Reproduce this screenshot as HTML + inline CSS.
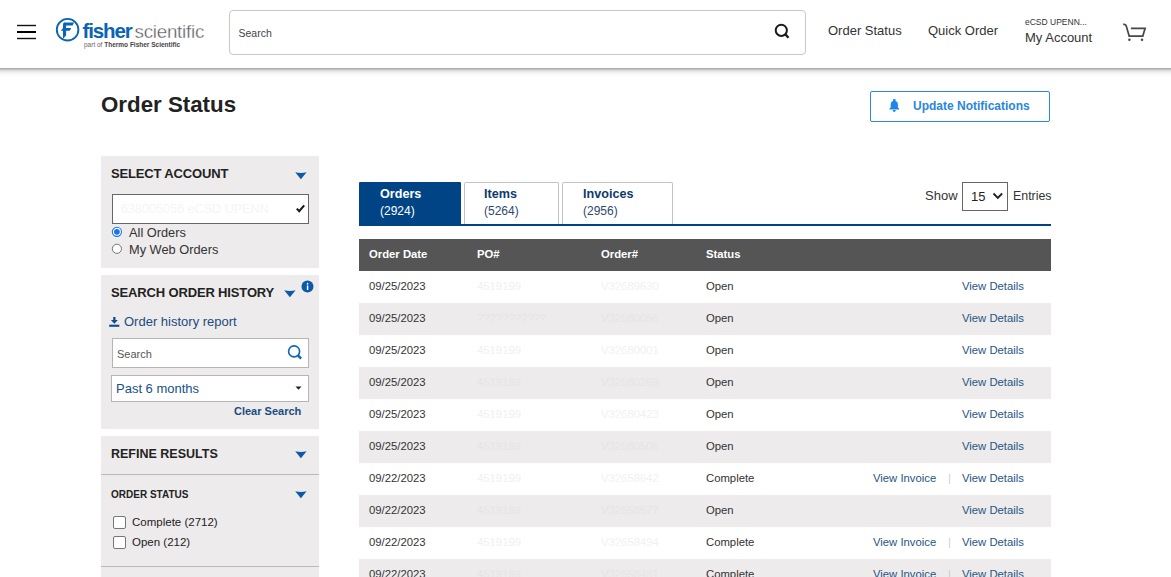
<!DOCTYPE html>
<html><head><meta charset="utf-8">
<style>
*{margin:0;padding:0;box-sizing:border-box;}
html,body{width:1171px;height:577px;overflow:hidden;background:#fff;}
body{font-family:"Liberation Sans",sans-serif;color:#333;position:relative;}
.a{position:absolute;white-space:nowrap;line-height:1;}
.hdr{position:absolute;left:0;top:0;width:1171px;height:68px;background:#fff;z-index:5;}
.shd{position:absolute;left:-30px;top:0;width:1231px;height:68px;background:#fff;box-shadow:0 1px 2px rgba(0,0,0,.22),0 2px 6px rgba(0,0,0,.3);z-index:4;}
.ham{position:absolute;left:17px;width:19px;height:2px;background:#111;}
.panel{position:absolute;left:101px;width:218px;background:#eeebec;}
.tri{position:absolute;width:12px;height:8px;}
.row{position:absolute;left:359px;width:692px;height:32px;}
.row.g{background:#eeebec;}
.row span{position:absolute;top:10px;font-size:11.3px;line-height:1;white-space:nowrap;}
.c1{left:10px;color:#333;}
.c2{left:118px;color:#f1f1f1;}
.row.g .c2,.row.g .c3{color:#e7e4e5;}
.c3{left:242px;color:#f1f1f1;}
.c4{left:347px;color:#333;}
.vd{left:603px;color:#275582;}
.vi{left:514px;color:#275582;}
.sep{left:589px;color:#ccc;}
</style></head><body>

<div class="shd"></div>
<div class="hdr">
  <svg style="position:absolute;left:0;top:0" width="50" height="50"><line x1="17" y1="25.5" x2="36" y2="25.5" stroke="#111" stroke-width="1.4"/><rect x="17" y="31" width="19" height="2" fill="#000"/><line x1="17" y1="38.5" x2="36" y2="38.5" stroke="#111" stroke-width="1.4"/></svg>
  <svg style="position:absolute;left:54px;top:16px" width="28" height="28" viewBox="0 0 28 28">
    <circle cx="13.6" cy="13.7" r="10.8" fill="none" stroke="#0a64b4" stroke-width="1.9"/>
    <path d="M10.9 6.4 L20.1 6.4 L18.6 9.5 L12.1 9.5 L12.1 12.1 L17.2 12.1 L15.8 14.8 L12.1 14.8 L12.1 19.4 L9 22.8 L9 14.8 L6.8 14.8 L9 12.1 L9 9.6 C9 7.5 9.6 6.3 10.9 6.3 Z" fill="#0a64b4"/>
  </svg>
  <div class="a" style="left:82.5px;top:21px;font-size:20.5px;font-weight:bold;color:#0a64b4;letter-spacing:-1.1px;">fisher</div>
  <div class="a" style="left:134.5px;top:22.5px;font-size:18.8px;color:#58585e;letter-spacing:-0.25px;-webkit-text-stroke:0.35px #fff;">scientific</div>
  <div class="a" style="left:84px;top:42px;font-size:6.5px;color:#666;">part of <b style="color:#444">Thermo Fisher Scientific</b></div>

  <div style="position:absolute;left:229px;top:10px;width:577px;height:45px;border:1px solid #c8c8c8;border-radius:4px;"></div>
  <div class="a" style="left:238.5px;top:28px;font-size:10.5px;color:#444;">Search</div>
  <svg style="position:absolute;left:773px;top:22px" width="20" height="20" viewBox="0 0 20 20">
    <circle cx="8.3" cy="8.3" r="5.6" fill="none" stroke="#1a1a1a" stroke-width="2"/>
    <line x1="12.3" y1="12.3" x2="15.5" y2="15.7" stroke="#1a1a1a" stroke-width="2.4"/>
  </svg>
  <div class="a" style="left:828px;top:24px;font-size:13px;color:#333;">Order Status</div>
  <div class="a" style="left:928px;top:24px;font-size:13px;color:#333;">Quick Order</div>
  <div class="a" style="left:1025px;top:18px;font-size:8.5px;color:#333;">eCSD UPENN...</div>
  <div class="a" style="left:1025px;top:31px;font-size:13px;color:#333;">My Account</div>
  <svg style="position:absolute;left:1120px;top:20px" width="30" height="24" viewBox="0 0 30 24">
    <path d="M3.2 4.4 C5 4.2 5.8 4.6 6.1 5.5 L9.2 16.1 L22.8 16.1 L25.1 8.3 L10.9 8.3" fill="none" stroke="#45454f" stroke-width="1.7" stroke-linejoin="miter"/>
    <circle cx="9.4" cy="19.8" r="1.25" fill="#45454f"/>
    <circle cx="22" cy="19.8" r="1.25" fill="#45454f"/>
  </svg>
</div>

<div class="a" style="left:101px;top:94px;font-size:22.3px;font-weight:bold;color:#222;">Order Status</div>
<div style="position:absolute;left:870px;top:91px;width:180px;height:31px;border:1px solid #2f87dc;border-radius:2px;"></div>
<svg style="position:absolute;left:888px;top:98px" width="13" height="15" viewBox="0 0 13 15">
  <path d="M5 1.8 Q5 1 6.3 1 Q7.6 1 7.6 1.8 L7.6 3 Q9.9 3.6 9.9 6.2 L9.9 9.6 L11.1 10.4 L11.1 11.6 L1.5 11.6 L1.5 10.4 L2.7 9.6 L2.7 6.2 Q2.7 3.6 5 3 Z M4.8 12.1 L7.7 12.1 Q7.7 14 6.25 14 Q4.8 14 4.8 12.1 Z" fill="#1f86e6"/>
</svg>
<div class="a" style="left:913px;top:100px;font-size:12px;font-weight:bold;color:#2a86de;">Update Notifications</div>

<!-- sidebar panel 1 -->
<div class="panel" style="top:156px;height:112px;"></div>
<div class="a" style="left:111px;top:167px;font-size:13px;font-weight:bold;color:#222;letter-spacing:-0.15px;">SELECT ACCOUNT</div>
<svg class="tri" style="left:295px;top:172px;" viewBox="0 0 12 8"><path d="M0.2 0.2 Q5.9 1.6 11.6 0.2 L5.9 7.3 Z" fill="#0b5aa8"/></svg>
<div style="position:absolute;left:112px;top:194px;width:197px;height:30px;background:#fff;border:1px solid #666;"></div>
<div class="a" style="left:121px;top:203px;font-size:12.6px;color:#f5f5f5;">638005056 eCSD UPENN</div>
<svg style="position:absolute;left:296px;top:204px" width="9" height="9" viewBox="0 0 9 9"><path d="M0.8 4.6 L3.2 7.2 L8.2 1.4" fill="none" stroke="#1a1a1a" stroke-width="2.1"/></svg>
<svg style="position:absolute;left:111px;top:226px" width="12" height="12" viewBox="0 0 12 12"><circle cx="5.9" cy="5.8" r="4.6" fill="#fff" stroke="#1a73e8" stroke-width="1.1"/><circle cx="5.9" cy="5.8" r="2.9" fill="#1a73e8"/></svg>
<div class="a" style="left:129px;top:226.5px;font-size:12.8px;color:#333;">All Orders</div>
<svg style="position:absolute;left:111px;top:243px" width="12" height="12" viewBox="0 0 12 12"><circle cx="5.9" cy="5.8" r="4.6" fill="#fff" stroke="#767676" stroke-width="1"/></svg>
<div class="a" style="left:129px;top:244px;font-size:12.8px;color:#333;">My Web Orders</div>

<!-- panel 2 -->
<div class="panel" style="top:275px;height:154px;"></div>
<div class="a" style="left:111px;top:286px;font-size:13px;font-weight:bold;color:#222;letter-spacing:-0.15px;">SEARCH ORDER HISTORY</div>
<svg class="tri" style="left:283.5px;top:290px;" viewBox="0 0 12 8"><path d="M0.2 0.2 Q5.9 1.6 11.6 0.2 L5.9 7.3 Z" fill="#0b5aa8"/></svg>
<svg style="position:absolute;left:301px;top:280px" width="13" height="13" viewBox="0 0 13 13"><circle cx="6.5" cy="6.5" r="6" fill="#0b5aa8"/><rect x="5.85" y="5.4" width="1.45" height="4.6" fill="#fff"/><circle cx="6.55" cy="3.7" r="0.85" fill="#fff"/></svg>
<svg style="position:absolute;left:109px;top:316px" width="11" height="12" viewBox="0 0 11 12"><path d="M4.2 0.9 L6.5 0.9 L6.5 4 L8.9 4 L5.35 7.8 L1.9 4 L4.2 4 Z" fill="#0f4c8c"/><rect x="0.2" y="8.7" width="10.1" height="2.1" fill="#0f4c8c"/></svg>
<div class="a" style="left:124px;top:315px;font-size:13px;color:#1a4c80;">Order history report</div>
<div style="position:absolute;left:112px;top:338px;width:197px;height:30px;background:#fff;border:1px solid #b5b5b5;"></div>
<div class="a" style="left:117px;top:348.5px;font-size:11px;color:#555;">Search</div>
<svg style="position:absolute;left:286px;top:344px" width="18" height="18" viewBox="0 0 18 18"><circle cx="8.1" cy="7.4" r="5.5" fill="none" stroke="#0c64b8" stroke-width="1.6"/><line x1="11.9" y1="11.3" x2="15.1" y2="14.6" stroke="#0c64b8" stroke-width="2.4"/></svg>
<div style="position:absolute;left:111px;top:375px;width:198px;height:27px;background:#fff;border:1px solid #b5b5b5;"></div>
<div class="a" style="left:116px;top:382px;font-size:13px;color:#17508a;">Past 6 months</div>
<svg style="position:absolute;left:294px;top:385px" width="9" height="6" viewBox="0 0 9 6"><path d="M1.5 1.5 L7.5 1.5 L4.5 4.8 Z" fill="#222"/></svg>
<div class="a" style="left:234px;top:406px;font-size:11px;font-weight:bold;color:#1a4c80;">Clear Search</div>

<!-- panel 3 -->
<div class="panel" style="top:436px;height:141px;"></div>
<div class="a" style="left:111px;top:448px;font-size:12.5px;font-weight:bold;color:#222;">REFINE RESULTS</div>
<svg class="tri" style="left:295px;top:451px;" viewBox="0 0 12 8"><path d="M0.2 0.2 Q5.9 1.6 11.6 0.2 L5.9 7.3 Z" fill="#0b5aa8"/></svg>
<div style="position:absolute;left:101px;top:474px;width:218px;height:1px;background:#b9b9b9;"></div>
<div class="a" style="left:111px;top:489.5px;font-size:10px;font-weight:bold;color:#222;">ORDER STATUS</div>
<svg class="tri" style="left:295px;top:491px;" viewBox="0 0 12 8"><path d="M0.2 0.2 Q5.9 1.6 11.6 0.2 L5.9 7.3 Z" fill="#0b5aa8"/></svg>
<div style="position:absolute;left:113px;top:516px;width:13px;height:13px;background:#fff;border:1px solid #767676;border-radius:2px;"></div>
<div class="a" style="left:132px;top:517px;font-size:11.5px;color:#222;">Complete (2712)</div>
<div style="position:absolute;left:113px;top:536px;width:13px;height:13px;background:#fff;border:1px solid #767676;border-radius:2px;"></div>
<div class="a" style="left:132px;top:537px;font-size:11.5px;color:#222;">Open (212)</div>
<div style="position:absolute;left:101px;top:566px;width:218px;height:1px;background:#b9b9b9;"></div>

<!-- tabs -->
<div style="position:absolute;left:359px;top:182px;width:102px;height:43px;background:#004485;border-radius:1px 1px 0 0;"></div>
<div class="a" style="left:380px;top:188px;font-size:12.6px;font-weight:bold;color:#fff;">Orders</div>
<div class="a" style="left:380px;top:205px;font-size:12px;color:#fff;">(2924)</div>
<div style="position:absolute;left:464px;top:182px;width:95px;height:43px;background:#fff;border:1px solid #c4c4c4;border-bottom:none;border-radius:2px 2px 0 0;"></div>
<div class="a" style="left:484px;top:188px;font-size:12.6px;font-weight:bold;color:#0e3a6e;">Items</div>
<div class="a" style="left:484px;top:205px;font-size:12px;color:#2c4a6e;">(5264)</div>
<div style="position:absolute;left:562px;top:182px;width:111px;height:43px;background:#fff;border:1px solid #c4c4c4;border-bottom:none;border-radius:2px 2px 0 0;"></div>
<div class="a" style="left:583px;top:188px;font-size:12.6px;font-weight:bold;color:#0e3a6e;">Invoices</div>
<div class="a" style="left:583px;top:205px;font-size:12px;color:#2c4a6e;">(2956)</div>
<div style="position:absolute;left:359px;top:224px;width:692px;height:2px;background:#004485;"></div>

<div class="a" style="left:925px;top:189px;font-size:13px;color:#333;">Show</div>
<div style="position:absolute;left:962px;top:182px;width:46px;height:29px;border:1px solid #666;background:#fff;"></div>
<div class="a" style="left:971px;top:190px;font-size:13px;color:#222;">15</div>
<svg style="position:absolute;left:992px;top:192px" width="12" height="8" viewBox="0 0 12 8"><path d="M1.5 1.5 L5.8 5.8 L10.1 1.5" fill="none" stroke="#222" stroke-width="1.9"/></svg>
<div class="a" style="left:1013px;top:190px;font-size:12.4px;color:#333;">Entries</div>

<!-- table -->
<div style="position:absolute;left:359px;top:239px;width:692px;height:32px;background:#555;"></div>
<div class="a" style="left:369px;top:249px;font-size:11.3px;font-weight:bold;color:#fff;">Order Date</div>
<div class="a" style="left:477px;top:249px;font-size:11.3px;font-weight:bold;color:#fff;">PO#</div>
<div class="a" style="left:601px;top:249px;font-size:11.3px;font-weight:bold;color:#fff;">Order#</div>
<div class="a" style="left:706px;top:249px;font-size:11.3px;font-weight:bold;color:#fff;">Status</div>

<div class="row" style="top:271px"><span class="c1">09/25/2023</span><span class="c2">4519199</span><span class="c3">V32689630</span><span class="c4">Open</span><span class="vd">View Details</span></div>
<div class="row g" style="top:303px"><span class="c1">09/25/2023</span><span class="c2">???????????</span><span class="c3">V32680056</span><span class="c4">Open</span><span class="vd">View Details</span></div>
<div class="row" style="top:335px"><span class="c1">09/25/2023</span><span class="c2">4519199</span><span class="c3">V32680001</span><span class="c4">Open</span><span class="vd">View Details</span></div>
<div class="row g" style="top:367px"><span class="c1">09/25/2023</span><span class="c2">4519199</span><span class="c3">V32680269</span><span class="c4">Open</span><span class="vd">View Details</span></div>
<div class="row" style="top:399px"><span class="c1">09/25/2023</span><span class="c2">4519199</span><span class="c3">V32680423</span><span class="c4">Open</span><span class="vd">View Details</span></div>
<div class="row g" style="top:431px"><span class="c1">09/25/2023</span><span class="c2">4519199</span><span class="c3">V32680506</span><span class="c4">Open</span><span class="vd">View Details</span></div>
<div class="row" style="top:463px"><span class="c1">09/22/2023</span><span class="c2">4519199</span><span class="c3">V32658642</span><span class="c4">Complete</span><span class="vi">View Invoice</span><span class="sep">|</span><span class="vd">View Details</span></div>
<div class="row g" style="top:495px"><span class="c1">09/22/2023</span><span class="c2">4519199</span><span class="c3">V32658577</span><span class="c4">Open</span><span class="vd">View Details</span></div>
<div class="row" style="top:527px"><span class="c1">09/22/2023</span><span class="c2">4519199</span><span class="c3">V32658494</span><span class="c4">Complete</span><span class="vi">View Invoice</span><span class="sep">|</span><span class="vd">View Details</span></div>
<div class="row g" style="top:559px"><span class="c1">09/22/2023</span><span class="c2">4519199</span><span class="c3">V32658481</span><span class="c4">Complete</span><span class="vi">View Invoice</span><span class="sep">|</span><span class="vd">View Details</span></div>

</body></html>
